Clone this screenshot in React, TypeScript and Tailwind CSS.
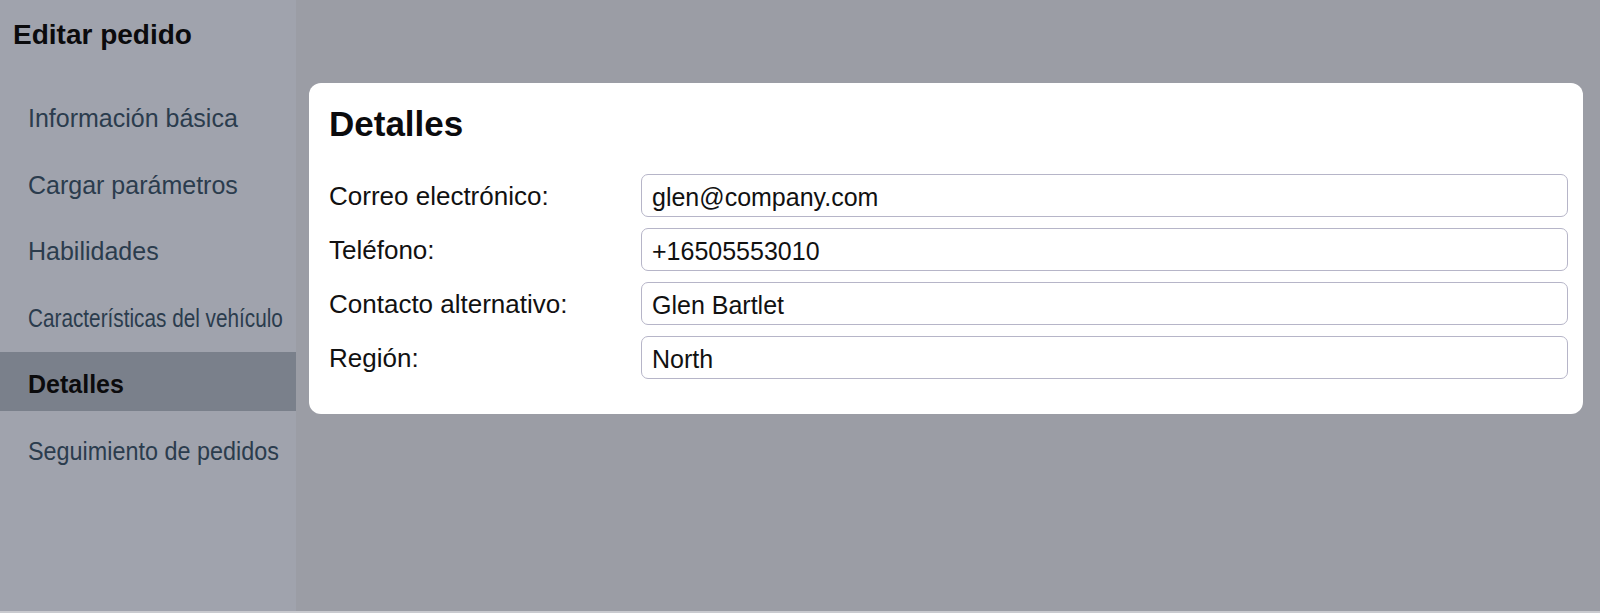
import React from "react";

const NAV_ITEMS = [
  { label: "Información básica" },
  { label: "Cargar parámetros" },
  { label: "Habilidades" },
  { label: "Características del vehículo", squeeze: "scale-x-[0.83]" },
  { label: "Detalles", active: true },
  { label: "Seguimiento de pedidos", squeeze: "scale-x-[0.935]" },
];

const FIELDS = [
  { label: "Correo electrónico:", value: "glen@company.com" },
  { label: "Teléfono:", value: "+16505553010" },
  { label: "Contacto alternativo:", value: "Glen Bartlet" },
  { label: "Región:", value: "North" },
];

function Sidebar() {
  return (
    <aside className="flex w-[296px] shrink-0 flex-col bg-[#a0a3ad]">
      <h2 className="mt-[19px] h-[32px] pl-[13px] text-[28px] font-bold leading-[32px] text-[#0b0b0d]">
        Editar pedido
      </h2>
      <nav className="mt-[35px] flex flex-col gap-[7.5px]">
        {NAV_ITEMS.map((item) => (
          <div
            key={item.label}
            className={
              item.active
                ? "flex h-[59px] items-center bg-[#7a808b] pl-[28px] pt-[7px] text-[25px] font-bold text-[#0b0b0d]"
                : "flex h-[59px] items-center pl-[28px] pt-[7px] text-[25px] text-[#2b3c4d]"
            }
          >
            <span
              className={
                item.squeeze === "scale-x-[0.83]"
                  ? "inline-block origin-left scale-x-[0.83] whitespace-nowrap"
                  : item.squeeze === "scale-x-[0.935]"
                    ? "inline-block origin-left scale-x-[0.935] whitespace-nowrap"
                    : "whitespace-nowrap"
              }
            >
              {item.label}
            </span>
          </div>
        ))}
      </nav>
    </aside>
  );
}

function DetailsCard() {
  return (
    <section className="rounded-[12px] bg-white pb-[35px] pl-[20px] pr-[15px] pt-[21px]">
      <h1 className="h-[40px] text-[35px] font-bold leading-[40px] text-[#0b0b0d]">
        Detalles
      </h1>
      <div className="mt-[30px] flex flex-col gap-[11px]">
        {FIELDS.map((field) => (
          <div key={field.label} className="flex items-center">
            <label className="w-[312px] shrink-0 text-[26px] leading-[30px] text-[#111]">
              {field.label}
            </label>
            <input
              readOnly
              value={field.value}
              className="h-[43px] flex-1 rounded-[7px] border-[1.5px] border-[#b6b5c8] bg-white px-[10px] pt-[3px] text-[25px] text-[#111] outline-none"
            />
          </div>
        ))}
      </div>
    </section>
  );
}

export default function App() {
  return (
    <div
      className="flex h-[613px] w-full flex-col overflow-hidden bg-[#9b9da5]"
      style={{ fontFamily: '"Liberation Sans", Arial, sans-serif' }}
    >
      <div className="flex flex-1">
        <Sidebar />
        <main className="flex-1 pl-[13px] pr-[17px] pt-[83px]">
          <DetailsCard />
        </main>
      </div>
      <div className="h-[2px] bg-[#c9cacf]" />
    </div>
  );
}
